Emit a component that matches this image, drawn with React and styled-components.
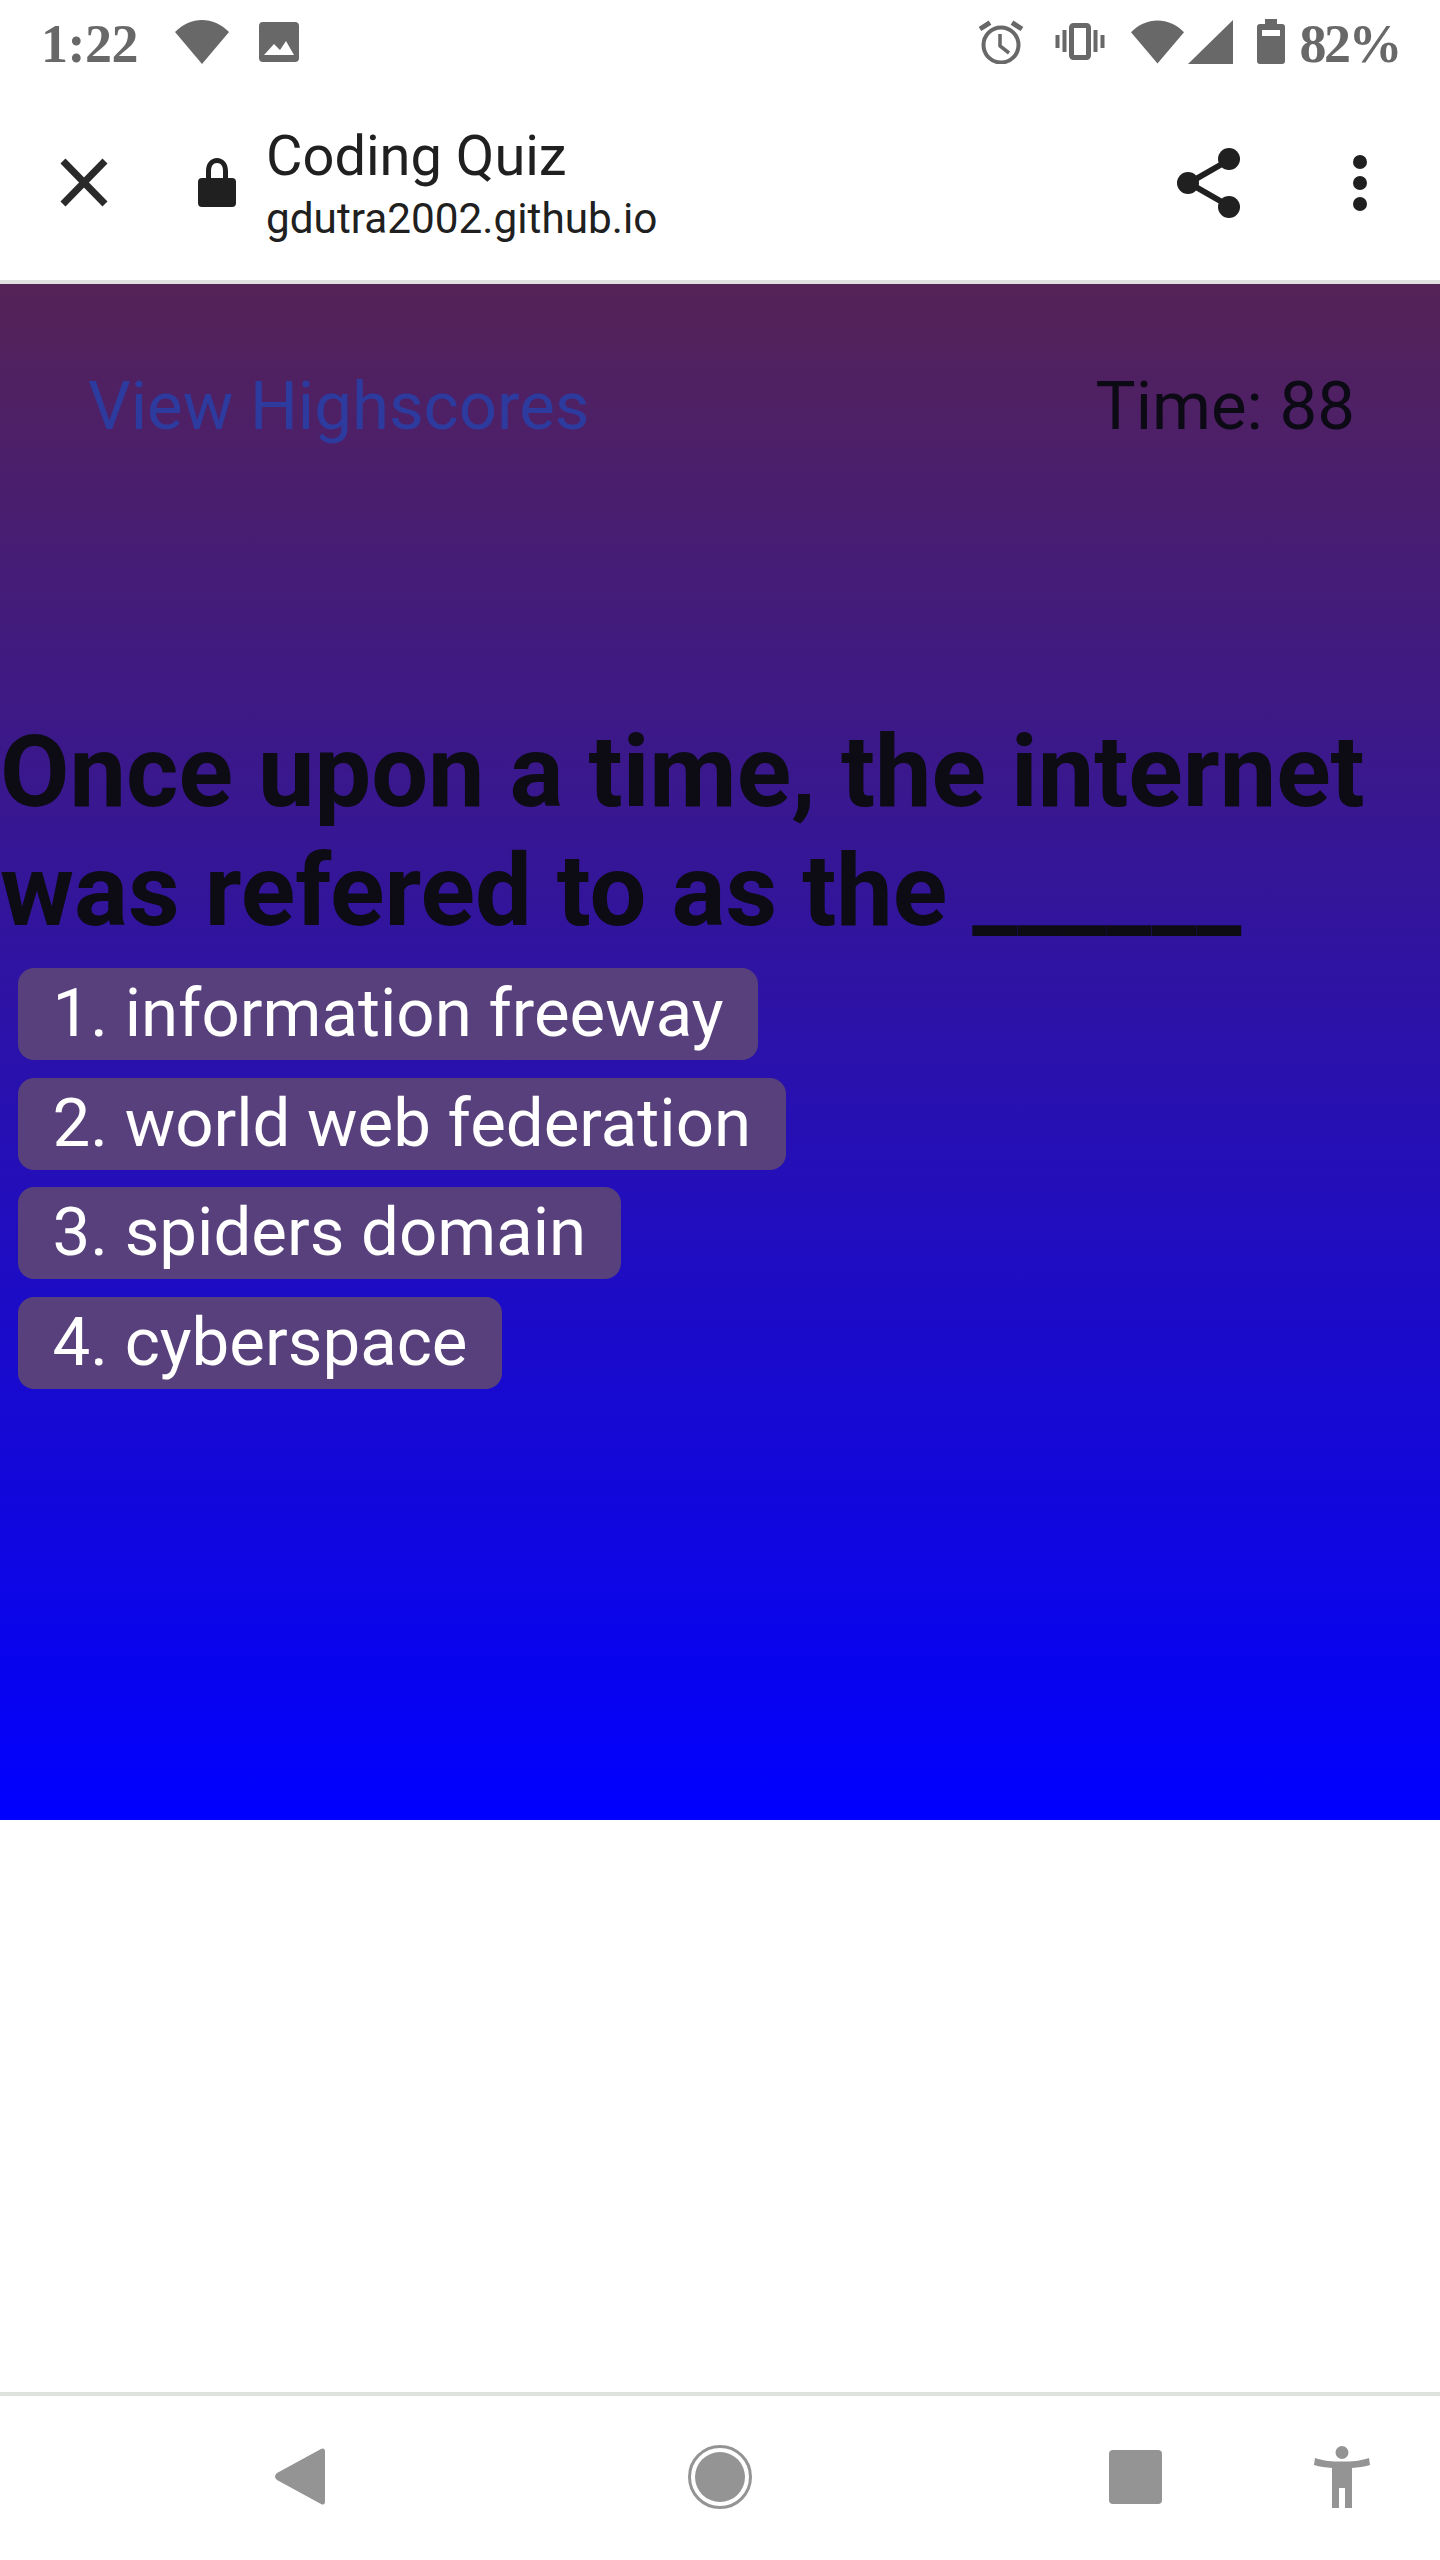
import React from 'react'
import styled, { createGlobalStyle } from 'styled-components'

const GlobalStyle = createGlobalStyle`
    html, body {
        margin: 0;
        padding: 0;
        background: #ffffff;
    }
`

const answers = ['1. information freeway', '2. world web federation', '3. spiders domain', '4. cyberspace']

const App = () => {
    return (
        <Screen>
            <GlobalStyle />

            <StatusBar>
                <StatusGroup>
                    <ClockText $spacing="-0.500px">1:22</ClockText>
                    <StatusIcon $left="37px" width="54" height="44" viewBox="0 0 54 44">
                        <path d="M0 12 C8 4 17 0 27 0 C37 0 46 4 54 12 L27 44 Z" />
                    </StatusIcon>
                    <StatusIcon $left="30px" width="40" height="40" viewBox="0 0 40 40">
                        <path fillRule="evenodd" d="M4 0 H36 Q40 0 40 4 V36 Q40 40 36 40 H4 Q0 40 0 36 V4 Q0 0 4 0 Z M5 33 H35 L27 19 L21 28 L15 22 Z" />
                    </StatusIcon>
                </StatusGroup>
                <StatusGroup>
                    <StatusIcon width="46" height="44" viewBox="0 0 46 44">
                        <circle cx="23" cy="25" r="17.500" fill="none" stroke="#686868" strokeWidth="4" />
                        <path d="M22 14 V26 L31 33" fill="none" stroke="#686868" strokeWidth="3.500" />
                        <path d="M2 9 L12 2.700 M44 9 L34 2.700" fill="none" stroke="#686868" strokeWidth="5" />
                    </StatusIcon>
                    <StatusIcon $left="31px" width="50" height="37" viewBox="0 0 50 37">
                        <rect x="16.500" y="2.500" width="17" height="32" rx="2" fill="none" stroke="#686868" strokeWidth="5" />
                        <path d="M7.500 7 H11.500 V29 H7.500 Z M38.500 7 H42.500 V29 H38.500 Z M0.500 12 H4.500 V25 H0.500 Z M45.500 12 H49.500 V25 H45.500 Z" />
                    </StatusIcon>
                    <StatusIcon $left="26px" width="53" height="44" viewBox="0 0 54 44">
                        <path d="M0 12 C8 4 17 0 27 0 C37 0 46 4 54 12 L27 44 Z" />
                    </StatusIcon>
                    <StatusIcon $left="4px" width="45" height="44" viewBox="0 0 45 44">
                        <path d="M45 0 V44 H0 Z" />
                    </StatusIcon>
                    <StatusIcon $left="24px" width="28" height="45" viewBox="0 0 28 45">
                        <path fillRule="evenodd" d="M8 0 H20 V5 H25 Q28 5 28 8 V42 Q28 45 25 45 H3 Q0 45 0 42 V8 Q0 5 3 5 H8 Z M5 11 V17 H23 V11 Z" />
                    </StatusIcon>
                    <ClockText $left="15px" $spacing="-2.500px">82%</ClockText>
                </StatusGroup>
            </StatusBar>

            <Toolbar>
                <CloseIcon width="48" height="49" viewBox="0 0 48 49">
                    <path d="M3 3 L45 46 M45 3 L3 46" />
                </CloseIcon>
                <LockIcon width="38" height="49" viewBox="0 0 38 49">
                    <path fillRule="evenodd" d="M8 20 V13 C8 5 13 0 19 0 C25 0 30 5 30 13 V20 H34 Q38 20 38 24 V45 Q38 49 34 49 H4 Q0 49 0 45 V24 Q0 20 4 20 Z M13 20 H25 V13 C25 8 23 5 19 5 C15 5 13 8 13 13 Z" />
                </LockIcon>
                <TitleBlock>
                    <PageTitle>Coding Quiz</PageTitle>
                    <PageUrl>gdutra2002.github.io</PageUrl>
                </TitleBlock>
                <ShareIcon width="64" height="70" viewBox="0 0 64 70">
                    <path d="M52 12 L12 35 L52 58" fill="none" stroke="#202020" strokeWidth="6" />
                    <ellipse cx="52" cy="11" rx="11" ry="11" />
                    <ellipse cx="11" cy="35" rx="11" ry="11" />
                    <ellipse cx="52" cy="59" rx="11" ry="11" />
                </ShareIcon>
                <MenuDots width="14" height="56" viewBox="0 0 14 56">
                    <circle cx="7" cy="7" r="7" />
                    <circle cx="7" cy="28" r="7" />
                    <circle cx="7" cy="49" r="7" />
                </MenuDots>
            </Toolbar>

            <QuizPage>
                <QuizHeader>
                    <HighscoreLink>View Highscores</HighscoreLink>
                    <Timer>Time: 88</Timer>
                </QuizHeader>
                <Question>Once upon a time, the internet was refered to as the ______</Question>
                <AnswerList>
                    {answers.map((answer) => (
                        <AnswerButton key={answer}>{answer}</AnswerButton>
                    ))}
                </AnswerList>
            </QuizPage>

            <Blank />

            <NavBar>
                <NavIcon $x="274px" width="51" height="57" viewBox="0 0 51 57">
                    <path d="M47 1 Q51 -1 51 4 V53 Q51 58 47 56 L3 32 Q-1 28.500 3 25 Z" />
                </NavIcon>
                <NavIcon $x="363px" width="64" height="64" viewBox="0 0 64 64">
                    <circle cx="32" cy="32" r="30.500" fill="none" stroke="#949494" strokeWidth="3" />
                    <circle cx="32" cy="32" r="25" />
                </NavIcon>
                <RecentsSquare />
                <NavIcon $x="152px" width="56" height="62" viewBox="0 0 56 62">
                    <circle cx="28" cy="6.500" r="6.500" />
                    <path d="M1 12 C10 15 18 15.500 28 15.500 C38 15.500 46 15 55 12 L56 19 C50 21 44 21.500 38 22 V62 H31 V42 H25 V62 H18 V22 C12 21.500 6 21 0 19 Z" />
                </NavIcon>
            </NavBar>
        </Screen>
    )
}

const Screen = styled.div`
    width: 1440px;
    height: 2560px;
    display: flex;
    flex-direction: column;
    overflow: hidden;
    font-family: Roboto, "Liberation Sans", sans-serif;
    background: #ffffff;
`

const StatusBar = styled.div`
    height: 96px;
    box-sizing: border-box;
    padding: 19px 40px 0 41px;
    display: flex;
    justify-content: space-between;
    align-items: flex-start;
`

const StatusGroup = styled.div`
    display: flex;
    align-items: center;
    height: 45px;
`

const ClockText = styled.span`
    font-family: "Liberation Serif", serif;
    font-size: 54px;
    line-height: 44px;
    font-weight: 700;
    letter-spacing: ${props => props.$spacing};
    color: #686868;
    margin: 4px 0 0 ${props => props.$left || '0'};
`

const StatusIcon = styled.svg`
    display: block;
    flex: none;
    fill: #686868;
    margin-left: ${props => props.$left || '0'};
`

const Toolbar = styled.div`
    height: 188px;
    box-sizing: border-box;
    border-bottom: 4px solid #e0e0e0;
    display: flex;
    align-items: center;
    padding: 0 73px 11px 60px;
`

const CloseIcon = styled.svg`
    flex: none;
    fill: none;
    stroke: #2a2a2a;
    stroke-width: 7;
    margin-right: 90px;
`

const LockIcon = styled.svg`
    flex: none;
    fill: #202020;
    margin-right: 30px;
`

const TitleBlock = styled.div`
    flex: 1;
    display: flex;
    flex-direction: column;
`

const PageTitle = styled.div`
    font-size: 56px;
    line-height: 66px;
    color: #202020;
`

const PageUrl = styled.div`
    font-size: 42.300px;
    line-height: 54px;
    margin: 3px 0 -3px 0;
    color: #202020;
`

const ShareIcon = styled.svg`
    flex: none;
    fill: #202020;
    margin-right: 112px;
`

const MenuDots = styled.svg`
    flex: none;
    fill: #202020;
`

const QuizPage = styled.div`
    height: 1536px;
    background: linear-gradient(#552357, #0000ff);
`

const QuizHeader = styled.div`
    display: flex;
    justify-content: space-between;
    padding: 83px 85px 0 88px;
`

const HighscoreLink = styled.div`
    font-size: 67.2px;
    color: #2d3b9f;
`

const Timer = styled.div`
    font-size: 67.2px;
    color: #0c0a14;
`

const Question = styled.h1`
    margin: 267px 0 0 0;
    font-size: 100.8px;
    font-weight: 700;
    color: #0d0b14;
`

const AnswerList = styled.div`
    display: flex;
    flex-direction: column;
    align-items: flex-start;
    gap: 17.500px;
    padding: 18px 18px 0 18px;
`

const AnswerButton = styled.button`
    border: none;
    height: 92px;
    padding: 0 34.500px 2px 34.500px;
    border-radius: 16px;
    background: #57407b;
    color: #ffffff;
    font-family: Roboto, "Liberation Sans", sans-serif;
    font-size: 67.2px;
`

const Blank = styled.div`
    flex: 1;
`

const NavBar = styled.div`
    height: 168px;
    box-sizing: border-box;
    border-top: 4px solid #e0e2df;
    padding-bottom: 3px;
    display: flex;
    align-items: center;
`

const NavIcon = styled.svg`
    flex: none;
    fill: #949494;
    margin-left: ${props => props.$x};
`

const RecentsSquare = styled.div`
    flex: none;
    width: 53px;
    height: 54px;
    margin-left: 357px;
    border-radius: 4px;
    background: #949494;
`

export default App
